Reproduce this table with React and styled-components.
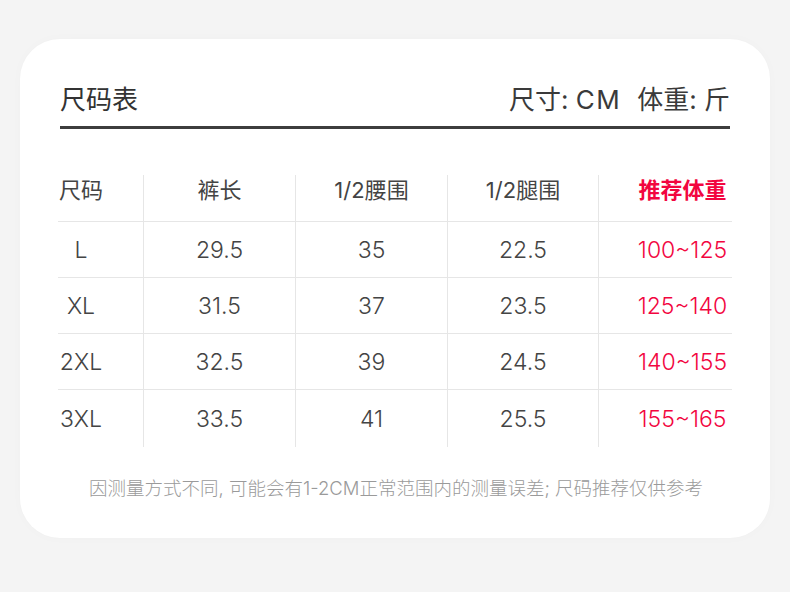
import styled, { createGlobalStyle } from 'styled-components'

const GlobalStyle = createGlobalStyle`
  html, body {
    margin: 0;
    padding: 0;
    background: #f4f4f4;
  }
  body {
    font-family: Inter, "Noto Sans CJK SC", sans-serif;
  }
`

const Page = styled.div`
  width: 790px;
  height: 592px;
  padding: 39px 20px 0;
  box-sizing: border-box;
`

const Card = styled.div`
  width: 750px;
  height: 499px;
  background: #fff;
  border-radius: 40px;
  padding: 0 38px 0 40px;
  box-sizing: border-box;
  box-shadow: 0 0 12px rgba(0, 0, 0, 0.02);
`

const Header = styled.div`
  display: flex;
  justify-content: space-between;
  align-items: center;
  padding: 46px 0 11px;
  border-bottom: 3px solid #3d3d3d;
  margin-right: 2px;
`

const Title = styled.div`
  font-size: 26px;
  line-height: 30px;
  color: #333;
`

const Units = styled.div`
  font-size: 26px;
  line-height: 30px;
  color: #3a3a3a;
  span + span {
    margin-left: 16px;
  }
  b {
    font-weight: 400;
    letter-spacing: 1.5px;
  }
`

const Table = styled.div`
  display: grid;
  grid-template-columns: 85px 152px 152px 151px 134px;
  margin: 46px 0 0 -2px;
  width: 675px;
`

const Cell = styled.div`
  height: ${p => (p.$head ? '46px' : p.$last ? '58px' : '56px')};
  display: flex;
  justify-content: center;
  align-items: ${p => (p.$head ? 'flex-start' : 'center')};
  font-size: ${p => (p.$head ? '22px' : '23px')};
  line-height: 30px;
  color: ${p => (p.$red ? '#f2063f' : '#444')};
  font-weight: ${p => (p.$head ? (p.$red ? 600 : 400) : 300)};
  border-left: ${p => (p.$col > 0 ? '1px solid #e6e6e6' : 'none')};
  border-top: ${p => (p.$head ? 'none' : '1px solid #e6e6e6')};
  box-sizing: border-box;
  padding-right: ${p => (p.$col === 0 ? '39px' : '0')};
  padding-left: ${p => (p.$col === 4 ? '34px' : '0')};
`

const Note = styled.div`
  margin-top: 28px;
  text-align: center;
  font-size: 18.5px;
  line-height: 26px;
  color: #9a9a9a;
  font-weight: 300;
`

const heads = ['尺码', '裤长', '1/2腰围', '1/2腿围', '推荐体重']

const rows = [
  ['L', '29.5', '35', '22.5', '100~125'],
  ['XL', '31.5', '37', '23.5', '125~140'],
  ['2XL', '32.5', '39', '24.5', '140~155'],
  ['3XL', '33.5', '41', '25.5', '155~165']
]

function App () {
  return (
    <Page>
      <GlobalStyle />
      <Card>
        <Header>
          <Title>尺码表</Title>
          <Units>
            <span>尺寸: <b>CM</b></span>
            <span>体重: 斤</span>
          </Units>
        </Header>
        <Table>
          {heads.map((h, i) => (
            <Cell key={h} $head $col={i} $red={i === 4}>{h}</Cell>
          ))}
          {rows.map((r, ri) =>
            r.map((v, i) => (
              <Cell key={ri + '-' + i} $col={i} $red={i === 4} $last={ri === rows.length - 1}>
                {v}
              </Cell>
            ))
          )}
        </Table>
        <Note>因测量方式不同, 可能会有1-2CM正常范围内的测量误差; 尺码推荐仅供参考</Note>
      </Card>
    </Page>
  )
}

export default App
